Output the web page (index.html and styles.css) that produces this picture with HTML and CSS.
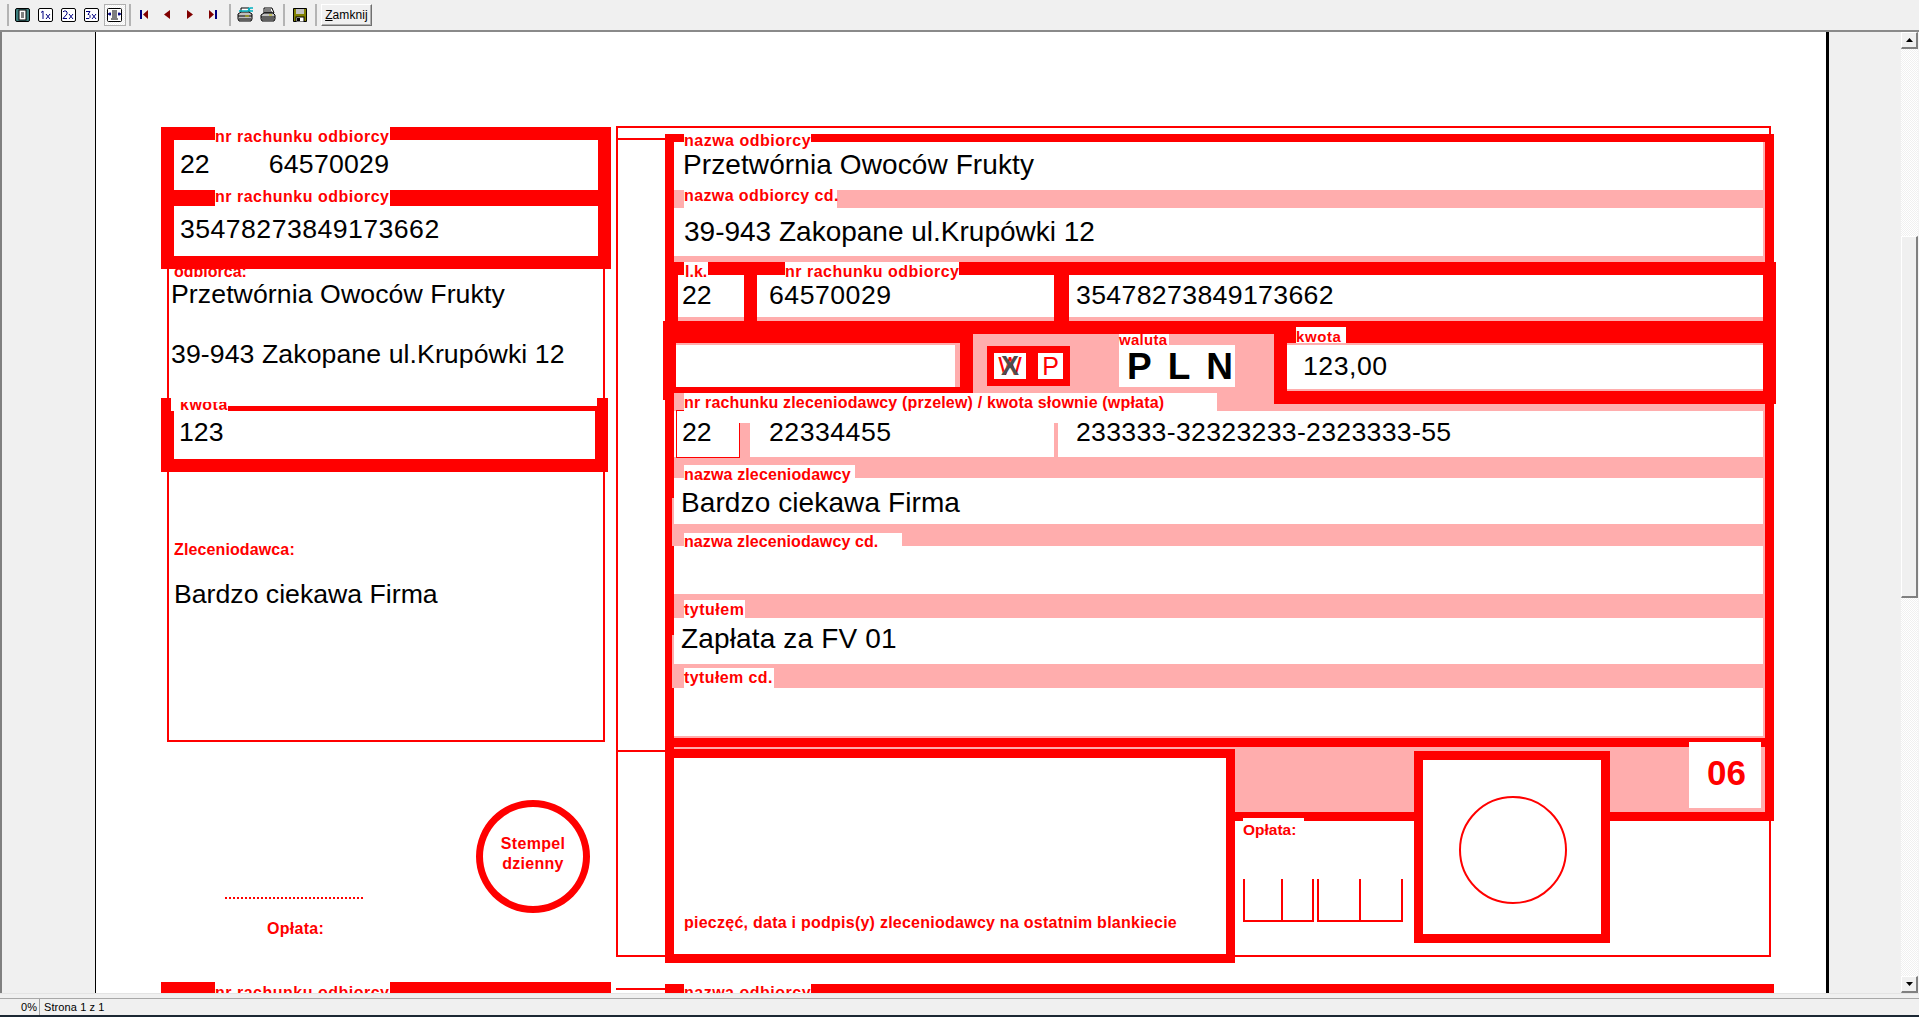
FILE: index.html
```html
<!DOCTYPE html>
<html lang="pl">
<head>
<meta charset="utf-8">
<title>Podgląd wydruku</title>
<link rel="stylesheet" href="styles.css">
</head>
<body>
<div class="app">
  <header class="toolbar">
    <span class="sep sep-a"></span>
    <span class="tb tb-first"><svg width="15" height="14" viewBox="0 0 15 14"><rect x=".5" y=".5" width="14" height="13" rx="1.5" fill="#3f7f7f" stroke="#000"/><rect x="4" y="2" width="7" height="10" fill="#fff" stroke="#000"/><path d="M6 5h3M6 7h3M6 9h3" stroke="#000"/></svg></span>
    <span class="tb"><svg width="15" height="14" viewBox="0 0 15 14"><rect x=".5" y=".5" width="14" height="13" rx="1.5" fill="#fff" stroke="#000"/><path d="M3 4.500l2-1.500v8" fill="none" stroke="#000080"/><path d="M8 6l4 5M12 6l-4 5" stroke="#000080"/></svg></span>
    <span class="tb"><svg width="15" height="14" viewBox="0 0 15 14"><rect x=".5" y=".5" width="14" height="13" rx="1.5" fill="#fff" stroke="#000"/><path d="M2 4l1-1h2l1 1v2l-4 4.500h4" fill="none" stroke="#000080"/><path d="M8 6l4 5M12 6l-4 5" stroke="#000080"/></svg></span>
    <span class="tb"><svg width="15" height="14" viewBox="0 0 15 14"><rect x=".5" y=".5" width="14" height="13" rx="1.5" fill="#fff" stroke="#000"/><path d="M2 3.500h4l-2 3h1l1 1v2l-1 1h-3" fill="none" stroke="#000080"/><path d="M8 6l4 5M12 6l-4 5" stroke="#000080"/></svg></span>
    <span class="tb-active"><svg width="15" height="14" viewBox="0 0 15 14"><rect x=".5" y=".5" width="14" height="13" rx="1" fill="#fff" stroke="#000"/><path d="M5 3h5M5 5h5M5 7h5M5 9h5M4 11h7" stroke="#000"/><path d="M4 6H1M3 4.500v3M11 6h3M12 4.500v3" stroke="#000080" stroke-width="1.500"/></svg></span>
    <span class="sep sep-b"></span>
    <span class="nav nav-first"><svg width="8" height="9" viewBox="0 0 8 9"><rect width="2" height="9" fill="#000080"/><path d="M8 0v9L3 4.500z" fill="#800000"/></svg></span>
    <span class="nav nav-prev"><svg width="6" height="9" viewBox="0 0 6 9"><path d="M6 0v9L0 4.500z" fill="#800000"/></svg></span>
    <span class="nav nav-next"><svg width="6" height="9" viewBox="0 0 6 9"><path d="M0 0v9l6-4.500z" fill="#800000"/></svg></span>
    <span class="nav nav-last"><svg width="8" height="9" viewBox="0 0 8 9"><path d="M0 0v9l5-4.500z" fill="#800000"/><rect x="6" width="2" height="9" fill="#000080"/></svg></span>
    <span class="sep sep-c"></span>
    <span class="prt prt-setup"><svg width="16" height="15" viewBox="0 0 16 15"><path d="M4 1h8v5H4z" fill="#fff" stroke="#000"/><path d="M1 7l3-2h8l3 2v5l-1 2H2l-1-2z" fill="#c0c0c0" stroke="#000"/><path d="M1 9h14M2 12h12" stroke="#000"/><path d="M8 9h4" stroke="#c0c000"/><path d="M2 4h9l2-3h3M11 1l2 3h3" fill="none" stroke="#00b0c0" stroke-width="1.500"/></svg></span>
    <span class="prt"><svg width="16" height="15" viewBox="0 0 16 15"><path d="M4 1h8l2 5H4z" fill="#fff" stroke="#000"/><path d="M5 3h6M5 5h7" stroke="#000"/><path d="M1 8l3-2h9l2 2v4l-1 2H2l-1-2z" fill="#c0c0c0" stroke="#000"/><path d="M1 10h14M2 12h12" stroke="#000"/><path d="M9 8h3" stroke="#c0c000"/></svg></span>
    <span class="sep sep-d"></span>
    <span class="save"><svg width="14" height="14" viewBox="0 0 14 14"><path d="M.5.500h13v13H.5z" fill="#808000" stroke="#000"/><rect x="3" y="1" width="8" height="5" fill="#c0c0c0"/><rect x="3" y="9" width="8" height="5" fill="#fff" stroke="#000"/><rect x="4" y="10" width="3" height="3" fill="#000"/></svg></span>
    <span class="sep sep-e"></span>
    <button class="close" type="button"><span class="u">Z</span>amknij</button>
  </header>

  <main class="view">
    <div class="gutter"></div>
    <div class="sheet">
      <div class="forms">
        <section class="stub">
          <div class="stub-acct">
            <div class="stub-cell stub-cell-a">
              <span class="lbl lbl-acct-a">nr rachunku odbiorcy</span>
              <span class="val val-stub-lk">22</span><span class="val val-stub-nr">64570029</span>
            </div>
            <div class="stub-cell stub-cell-b">
              <span class="lbl lbl-acct-b">nr rachunku odbiorcy</span>
              <span class="val val-stub-long">35478273849173662</span>
            </div>
          </div>
          <div class="stub-body">
            <span class="plain plain-odb">odbiorca:</span>
            <p class="name stub-name">Przetwórnia Owoców Frukty</p>
            <p class="name stub-addr">39-943 Zakopane ul.Krupówki 12</p>
            <div class="stub-amount">
              <span class="kw-clip"><span class="lbl-kw">kwota</span></span>
              <div class="stub-amount-in"><span class="val">123</span></div>
            </div>
            <span class="plain plain-zl">Zleceniodawca:</span>
            <p class="name stub-firm">Bardzo ciekawa Firma</p>
          </div>
          <div class="stub-foot">
            <div class="sign">
              <div class="dots"></div>
              <span class="plain plain-op">Opłata:</span>
            </div>
            <div class="stamp"><span>Stempel</span><span>dzienny</span></div>
          </div>
        </section>

        <section class="transfer">
          <div class="frame"><i class="frame-t"></i><i class="frame-b"></i></div>
          <div class="col">
            <i class="nick nick-a"></i><i class="nick nick-b"></i>
            <div class="white h48"><span class="name t-name">Przetwórnia Owoców Frukty</span></div>
            <div class="strip s18"><span class="lbl l-od-cd">nazwa odbiorcy cd.</span></div>
            <div class="white h48"><span class="name t-addr">39-943 Zakopane ul.Krupówki 12</span></div>
            <div class="strip s6"></div>
            <div class="acct">
              <span class="lbl l-lk">l.k.</span>
              <span class="lbl l-nr">nr rachunku odbiorcy</span>
              <div class="acct-c c-lk"><span class="val">22</span></div>
              <div class="acct-c c-nr"><span class="val">64570029</span></div>
              <div class="acct-c c-long"><span class="val">35478273849173662</span></div>
            </div>
            <div class="pay">
              <div class="pay-l"><div class="pay-l-in"><div class="pay-l-w"></div></div></div>
              <div class="pay-m">
                <div class="wp"><span class="wp-c wp-w">W<b>X</b></span><span class="wp-c wp-p">P</span></div>
                <div class="cur"><span class="lbl l-wal">waluta</span><div class="pln">PLN</div></div>
              </div>
              <div class="pay-r">
                <span class="lbl l-kw">kwota</span>
                <div class="pay-r-in"><span class="val">123,00</span></div>
              </div>
            </div>
            <div class="strip s18"><span class="lbl l-zlec">nr rachunku zleceniodawcy (przelew) / kwota słownie (wpłata)</span></div>
            <div class="acct2">
              <div class="a2-lk"><span class="val">22</span></div>
              <i class="a2-gap g10"></i>
              <div class="a2-nr"><span class="val">22334455</span></div>
              <i class="a2-gap g4"></i>
              <div class="a2-long"><span class="val">233333-32323233-2323333-55</span></div>
            </div>
            <div class="strip s21"><span class="lbl l-nz">nazwa zleceniodawcy</span></div>
            <div class="white h46"><span class="name t-firm">Bardzo ciekawa Firma</span></div>
            <div class="strip s22"><span class="lbl l-nzc">nazwa zleceniodawcy cd.</span></div>
            <div class="white h48"></div>
            <div class="strip s24"><span class="lbl l-ty">tytułem</span></div>
            <div class="white h46"><span class="name t-title">Zapłata za FV 01</span></div>
            <div class="strip s24"><span class="lbl l-tyc">tytułem cd.</span></div>
            <div class="white h48"></div>
            <div class="strip s2"></div>
            <div class="foot"><div class="code">06</div></div>
            <span class="lbl l-od">nazwa odbiorcy</span>
          </div>
          <div class="box-sign"><span class="plain plain-sign">pieczęć, data i podpis(y) zleceniodawcy na ostatnim blankiecie</span></div>
          <span class="lbl l-op">Opłata:</span>
          <div class="ticks ticks-a"><i></i></div>
          <div class="ticks ticks-b"><i></i></div>
          <div class="box-seal"><div class="seal"></div></div>
        </section>
      </div>

      <div class="next">
        <div class="next-stub"><span class="lbl l-next-a">nr rachunku odbiorcy</span></div>
        <div class="next-tf"><i class="next-line"></i><div class="next-band"><span class="lbl l-next-b">nazwa odbiorcy</span></div></div>
      </div>
    </div>
    <div class="gutter-r"></div>
    <div class="scroll">
      <span class="sb-btn"><svg width="7" height="4" viewBox="0 0 7 4"><path d="M3.500 0L7 4H0z"/></svg></span>
      <div class="sb-track"><div class="sb-thumb"></div></div>
      <span class="sb-btn"><svg width="7" height="4" viewBox="0 0 7 4"><path d="M0 0h7L3.500 4z"/></svg></span>
    </div>
  </main>

  <footer class="status">
    <span class="st-pct">0%</span>
    <span class="st-page">Strona 1 z 1</span>
  </footer>
  <div class="taskline"></div>
</div>
</body>
</html>
```
FILE: styles.css
```css
* { box-sizing: border-box; }
html, body { margin: 0; height: 100%; overflow: hidden; }
body { font-family: "Liberation Sans", Arial, sans-serif; background: #f0f0f0; color: #000; }
p { margin: 0; }
i { display: block; }

.app { display: flex; flex-direction: column; height: 1017px; }

/* toolbar */
.toolbar { flex: none; height: 32px; display: flex; align-items: flex-start; background: #f0f0f0; border-bottom: 2px solid #8a8a8a; }
.sep { width: 2px; height: 22px; margin-top: 4px; background: #b4b4b4; flex: none; }
.sep-a { margin-left: 7px; }
.tb, .tb-active, .nav, .prt, .save { flex: none; display: block; }
.tb svg, .tb-active svg, .nav svg, .prt svg, .save svg { display: block; }
.tb { margin-top: 8px; margin-left: 8px; }
.tb-first { margin-left: 6px; }
.tb-active { margin-top: 4px; margin-left: 5px; width: 22px; height: 22px; padding: 3px 2px; border: 1px solid #b0b0b0; background: repeating-conic-gradient(#fff 0 25%, #f0f0f0 0 50%) 0 0 / 2px 2px; }
.sep-b { margin-left: 3px; }
.nav { margin-top: 10px; }
.nav-first { margin-left: 9px; }
.nav-prev { margin-left: 16px; }
.nav-next { margin-left: 17px; }
.nav-last { margin-left: 16px; }
.sep-c { margin-left: 12px; }
.prt { margin-top: 7px; margin-left: 7px; }
.prt-setup { margin-left: 6px; }
.sep-d { margin-left: 7px; }
.save { margin-top: 8px; margin-left: 8px; }
.sep-e { margin-left: 8px; }
.close { margin: 4px 0 0 4px; width: 51px; height: 22px; padding: 0; font: 12px "Liberation Sans", Arial, sans-serif; letter-spacing: .1px; background: #f0f0f0; color: #000; border: 1px solid; border-color: #fff #707070 #707070 #fff; box-shadow: inset -1px -1px 0 #b0b0b0; }
.u { text-decoration: underline; }

/* main */
.view { flex: none; height: 961px; display: flex; }
.gutter { width: 96px; flex: none; background: #f0f0f0; border-left: 2px solid #808080; border-right: 1px solid #000; }
.gutter-r { width: 75px; flex: none; background: #f0f0f0; border-left: 3px solid #000; }
.sheet { width: 1730px; flex: none; background: #fff; overflow: hidden; padding: 94px 0 0 65px; }

.scroll { width: 18px; flex: none; display: flex; flex-direction: column; padding-right: 1px; background: #f4f4f4; }
.sb-btn { flex: none; height: 17px; display: flex; align-items: center; justify-content: center; background: #f0f0f0; border: solid; border-width: 1px 2px 2px 1px; border-color: #fff #808080 #808080 #fff; }
.sb-track { flex: 1; padding-top: 187px; background: repeating-conic-gradient(#fff 0 25%, #f0f0f0 0 50%) 0 0 / 2px 2px; }
.sb-thumb { height: 362px; background: #f0f0f0; border: solid; border-width: 1px 2px 2px 1px; border-color: #fff #808080 #808080 #fff; }

/* status bar */
.status { flex: none; height: 22px; display: flex; align-items: center; background: #f0f0f0; border-top: 1px solid #e4e4e4; font-size: 11px; padding-top: 4px; position: relative; }
.status::before { content: ""; position: absolute; left: 0; right: 0; top: 4px; height: 1px; background: #a8a8a8; }
.st-pct { width: 40px; text-align: right; padding-right: 2px; border-right: 1px solid #a0a0a0; line-height: 16px; }
.st-page { padding-left: 4px; line-height: 16px; letter-spacing: .1px; }
.taskline { flex: 1; background: #1b2733; }

/* form */
.forms { display: flex; height: 856px; }
.stub { width: 450px; flex: none; display: flex; flex-direction: column; margin-top: 1px; margin-right: 5px; }

.lbl { display: block; font-weight: 700; font-size: 16px; letter-spacing: .5px; color: #f00; background: #fff; white-space: nowrap; line-height: 18px; z-index: 2; }
.val { font-size: 26.67px; line-height: 30px; color: #000; white-space: nowrap; }
.name { font-size: 26.67px; line-height: 30px; color: #000; white-space: nowrap; }
.plain { display: block; font-weight: 700; font-size: 16px; color: #f00; line-height: 18px; white-space: nowrap; }

/* left stub */
.stub-acct { position: relative; height: 142px; border: 13px solid #f00; background: #f00; display: flex; flex-direction: column; gap: 16px; z-index: 2; }
.stub-cell { height: 50px; background: #fff; position: relative; padding: 9px 0 0 6px; }
.stub-cell-b { padding-top: 8px; }
.stub-cell .lbl { position: absolute; left: 41px; width: 175px; }
.lbl-acct-a { top: -13px; height: 19px; padding-top: 1px; }
.lbl-acct-b { top: -16px; height: 16px; line-height: 14px; }
.val-stub-nr { margin-left: 59px; letter-spacing: .25px; }
.val-stub-long { letter-spacing: .45px; }

.stub-body { margin-left: 6px; width: 438px; height: 473px; border: 2px solid #f00; border-top: 0; position: relative; display: flex; flex-direction: column; padding-left: 2px; }
.plain-odb { margin: -6px 0 0 3px; height: 13px; }
.stub-name { margin-top: 3px; letter-spacing: .08px; }
.stub-addr { margin-top: 30px; letter-spacing: .08px; }
.plain-zl { margin: 172px 0 0 3px; letter-spacing: .12px; }
.stub-firm { margin: 20px 0 0 3px; letter-spacing: 0; }

.stub-amount { position: absolute; left: -8px; top: 129px; width: 447px; height: 74px; background: linear-gradient(#fff, #fff) 0 0 / 100% 8px no-repeat, #f00; }
.stub-amount::before { content: ""; position: absolute; left: 0; top: 0; width: 10px; height: 8px; background: #f00; }
.stub-amount::after { content: ""; position: absolute; right: 0; top: 0; width: 11px; height: 8px; background: #f00; }
.stub-amount-in { position: absolute; left: 13px; top: 8px; right: 13px; height: 53px; border-top: 5px solid #f00; background: #fff; padding: 6px 0 0 5px; }
.kw-clip { position: absolute; z-index: 1; left: 10px; top: 4px; width: 57px; height: 9px; overflow: hidden; background: #fff; }
.lbl-kw { display: block; margin: -6px 0 0 9px; font: 700 16px/18px "Liberation Sans", Arial, sans-serif; color: #f00; letter-spacing: .5px; }

.stub-foot { display: flex; align-items: flex-start; }
.sign { margin: 155px 0 0 64px; width: 138px; text-align: center; }
.dots { height: 2px; border-top: 2px dotted #f00; }
.plain-op { margin-top: 21px; margin-left: 3px; letter-spacing: .3px; }
.stamp { margin: 58px 0 0 113px; width: 114px; height: 113px; border: 7px solid #f00; border-radius: 50%; display: flex; flex-direction: column; align-items: center; padding-top: 27px; font-weight: 700; font-size: 16px; line-height: 20px; letter-spacing: .3px; color: #f00; }

/* right form */
.transfer { position: relative; width: 1160px; flex: none; }
.frame { position: absolute; left: 0; top: 0; width: 1155px; height: 831px; border: 2px solid #f00; }
.frame-t { position: absolute; left: 0; top: 10px; width: 48px; height: 2px; background: #f00; }
.frame-b { position: absolute; left: 0; top: 622px; width: 48px; height: 2px; background: #f00; }

.col { position: absolute; left: 49px; top: 8px; width: 1109px; height: 687px; display: flex; flex-direction: column; background: #ffadad; border: solid #f00; border-width: 8px 9px 0; }
.white { background: #fff; margin-right: 2px; position: relative; flex: none; }
.h46 { height: 46px; }
.h48 { height: 48px; }
.strip { flex: none; position: relative; z-index: 1; }
.s2 { height: 2px; }
.s6 { height: 6px; }
.s18 { height: 18px; }
.s21 { height: 21px; }
.s22 { height: 22px; }
.s24 { height: 24px; }
.strip .lbl { position: absolute; left: 10px; bottom: 0; }

.nick { position: absolute; left: -2px; width: 2px; background: #ffadad; z-index: 1; }
.nick-a { top: 356px; height: 48px; }
.nick-b { top: 493px; height: 53px; }

.l-od { position: absolute; left: 10px; top: -8px; width: 127px; height: 16px; line-height: 13px; }
.l-od-cd { width: 153px; height: 18px; line-height: 12px; letter-spacing: .4px; }
.l-zlec { width: 533px; height: 30px; bottom: auto !important; top: 0; line-height: 19px; letter-spacing: .18px; }
.l-nz { width: 171px; height: 13px; line-height: 19px; letter-spacing: .12px; }
.l-nzc { width: 218px; height: 13px; line-height: 17px; letter-spacing: .1px; }
.l-ty { width: 61px; height: 18px; line-height: 19px; }
.l-tyc { width: 90px; height: 20px; line-height: 19px; letter-spacing: .4px; }

.t-name { position: absolute; left: 9px; top: 8px; font-size: 28px; letter-spacing: .1px; }
.t-addr { position: absolute; left: 10px; top: 9px; font-size: 28px; }
.t-firm { position: absolute; left: 7px; top: 10px; font-size: 28px; letter-spacing: .1px; }
.t-title { position: absolute; left: 7px; top: 6px; font-size: 28px; letter-spacing: .15px; }

.acct { flex: none; position: relative; display: flex; margin-right: -11px; height: 59px; padding: 13px 13px 0 4px; background: #f00; gap: 13px; }
.acct .l-lk { position: absolute; left: 10px; top: 0; width: 24px; height: 16px; padding-left: 1px; letter-spacing: 0; line-height: 19px; }
.acct .l-nr { position: absolute; left: 111px; top: 0; width: 174px; height: 16px; line-height: 19px; }
.acct-c { height: 46px; background: #fff; border-bottom: 4px solid #ffadad; }
.c-lk { width: 66px; padding-left: 4px; }
.c-nr { width: 297px; padding-left: 12px; letter-spacing: .5px; }
.c-long { flex: 1; margin-left: 2px; padding-left: 7px; letter-spacing: .35px; }
.acct-c .val { display: block; padding-top: 5px; }

.pay { flex: none; display: flex; margin: 0 -11px; height: 72px; position: relative; z-index: 2; }
.pay-l { width: 310px; flex: none; background: #f00; padding: 22px 13px 6px; position: relative; }
.pay-l::after { content: ""; position: absolute; left: 0; top: 72px; width: 11px; height: 7px; background: #f00; }
.pay-l-in { height: 44px; background: #ffadad; padding-top: 2px; }
.pay-l-w { width: 279px; height: 42px; background: #fff; }
.pay-m { width: 301px; flex: none; display: flex; align-items: flex-start; border-top: 13px solid #f00; background: #ffadad; }
.wp { margin: 12px 0 0 14px; width: 83px; height: 40px; padding: 7px; background: #f00; display: flex; gap: 12px; }
.wp-c { height: 26px; background: #fff; color: #f00; font-size: 25px; line-height: 26px; text-align: center; position: relative; }
.wp-w { width: 32px; }
.wp-w b { position: absolute; left: 0; right: 0; top: 0; color: #4d4d4d; font-size: 27px; }
.wp-p { width: 25px; }
.cur { margin-left: 49px; width: 116px; position: relative; }
.l-wal { position: absolute; left: 0; top: 0; width: 50px; height: 11px; line-height: 12px; font-size: 15px; letter-spacing: .3px; }
.pln { margin-top: 11px; height: 42px; background: #fff; font: 700 37px/44px "Liberation Sans", Arial, sans-serif; letter-spacing: 16px; padding-left: 8px; white-space: nowrap; }
.pay-r { width: 502px; flex: none; height: 83px; background: #f00; padding: 22px 13px 13px; position: relative; }
.l-kw { position: absolute; left: 22px; top: 6px; width: 50px; height: 16px; line-height: 20px; font-size: 15px; letter-spacing: .6px; }
.pay-r-in { height: 48px; background: #fff; border: solid #ffadad; border-width: 2px 0; padding: 6px 0 0 16px; letter-spacing: .5px; }

.acct2 { flex: none; height: 46px; display: flex; margin-right: 2px; background: #fff; position: relative; }
.acct2 .val { display: block; padding-top: 6px; }
.a2-lk { margin-left: 2px; width: 64px; height: 47px; border: 1px solid #f00; border-top: 0; padding-left: 5px; position: relative; box-shadow: 0 -1px 0 #f00; background: #fff; }
.a2-gap { margin-top: 12px; background: #ffadad; flex: none; }
.g10 { width: 10px; }
.g4 { width: 4px; }
.a2-nr { width: 304px; padding-left: 19px; letter-spacing: .5px; }
.a2-long { flex: 1; padding-left: 18px; letter-spacing: .3px; }

.foot { flex: none; height: 83px; position: relative; border: solid #f00; border-width: 9px 0; }
.code { position: absolute; right: 4px; top: -5px; width: 72px; height: 66px; padding-left: 3px; background: #fff; color: #f00; font: 700 35px/62px "Liberation Sans", Arial, sans-serif; text-align: center; }

.box-sign { position: absolute; left: 49px; top: 623px; width: 570px; height: 214px; border: 9px solid #f00; background: #fff; padding: 156px 0 0 10px; }
.plain-sign { letter-spacing: .25px; }
.l-op { position: absolute; left: 627px; top: 692px; width: 61px; height: 18px; line-height: 23px; font-size: 15.5px; letter-spacing: 0; }
.ticks { position: absolute; top: 753px; height: 43px; border: 2px solid #f00; border-top: 0; }
.ticks i { position: absolute; top: 0; bottom: 0; width: 2px; background: #f00; }
.ticks-a { left: 627px; width: 71px; }
.ticks-a i { left: 36px; }
.ticks-b { left: 701px; width: 86px; }
.ticks-b i { left: 40px; }
.box-seal { position: absolute; left: 798px; top: 625px; width: 196px; height: 192px; border: 9px solid #f00; background: #fff; padding: 36px 0 0 36px; }
.seal { width: 108px; height: 108px; border: 2px solid #f00; border-radius: 50%; }

/* next form */
.next { display: flex; }
.next-stub { width: 450px; height: 20px; margin-right: 5px; background: #f00; flex: none; position: relative; }
.l-next-a { position: absolute; left: 54px; top: 0; width: 175px; height: 20px; padding-top: 2px; }
.next-tf { position: relative; flex: none; width: 1158px; }
.next-line { position: absolute; left: 0; top: 6px; width: 49px; height: 2px; background: #f00; }
.next-band { position: absolute; left: 49px; top: 2px; width: 1109px; height: 9px; background: #f00; }
.l-next-b { position: absolute; left: 19px; top: 0; width: 127px; height: 16px; }
```
